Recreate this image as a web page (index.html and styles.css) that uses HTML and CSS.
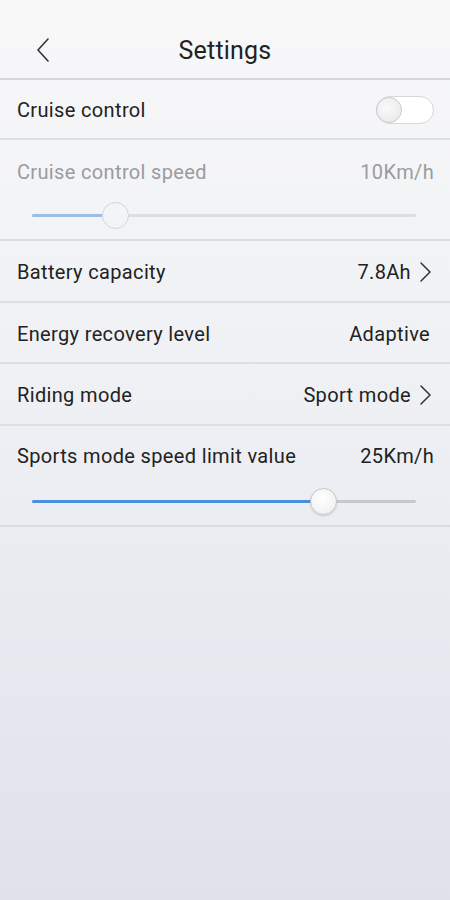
FILE: index.html
```
<!doctype html>
<html lang="en">
<head>
  <meta charset="utf-8">
  <title>Settings</title>
  <meta name="viewport" content="width=device-width, initial-scale=1">
  <link rel="stylesheet" href="styles.css">
</head>
<body>
  <header class="topbar">
    <button class="back" aria-label="Back">
      <svg width="16" height="26" viewBox="0 0 16 26"><path d="M13 2 L3 13 L13 24" fill="none" stroke="#333" stroke-width="1.6" stroke-linecap="round" stroke-linejoin="round"/></svg>
    </button>
    <h1>Settings</h1>
  </header>

  <div class="list">
    <div class="row first">
      <span class="label">Cruise control</span>
      <span class="toggle"><span class="knob"></span></span>
    </div>

    <div class="row tall disabled">
      <div class="line">
        <span class="label">Cruise control speed</span>
        <span class="value">10Km/h</span>
      </div>
      <div class="slider">
        <div class="track"><div class="fill" style="width:21.6%"></div></div>
        <span class="thumb" style="left:21.6%"></span>
      </div>
    </div>

    <div class="row">
      <span class="label">Battery capacity</span>
      <span class="value">7.8Ah <svg class="chev" width="14" height="22" viewBox="0 0 14 22"><path d="M3 2 L12 11 L3 20" fill="none" stroke="#333" stroke-width="1.5" stroke-linecap="round" stroke-linejoin="round"/></svg></span>
    </div>

    <div class="row">
      <span class="label">Energy recovery level</span>
      <span class="value pad">Adaptive</span>
    </div>

    <div class="row">
      <span class="label">Riding mode</span>
      <span class="value">Sport mode <svg class="chev" width="14" height="22" viewBox="0 0 14 22"><path d="M3 2 L12 11 L3 20" fill="none" stroke="#333" stroke-width="1.5" stroke-linecap="round" stroke-linejoin="round"/></svg></span>
    </div>

    <div class="row tall">
      <div class="line">
        <span class="label">Sports mode speed limit value</span>
        <span class="value">25Km/h</span>
      </div>
      <div class="slider">
        <div class="track"><div class="fill" style="width:75.8%"></div></div>
        <span class="thumb" style="left:75.8%"></span>
      </div>
    </div>
  </div>
</body>
</html>
```

FILE: styles.css
```
:root {
  --text: #222;
  --muted: #9a9b9e;
  --line: #dcdee3;
  --blue: #4a8fe0;
}
html { height: 100%; }
body {
  margin: 0;
  min-height: 100%;
  font-family: Roboto, "Noto Sans", sans-serif;
  color: var(--text);
  background: linear-gradient(#f8f8f9 0%, #eef0f4 45%, #dfe2ea 100%);
}
.topbar {
  height: 80px;
  box-sizing: border-box;
  padding-top: 22px;
  display: flex;
  align-items: center;
  justify-content: center;
  position: relative;
  border-bottom: 2px solid #d4d6da;
}
.topbar h1 {
  margin: 0;
  font-size: 25px;
  font-weight: 400;
  letter-spacing: 0.2px;
}
.back {
  position: absolute;
  left: 35px;
  top: 37px;
  background: none;
  border: 0;
  padding: 0;
}
.list { border-bottom: 2px solid #d9dbe0; }
.row {
  height: 61.5px;
  box-sizing: border-box;
  display: flex;
  align-items: center;
  justify-content: space-between;
  padding: 3px 16px 0 17px;
  border-top: 2px solid var(--line);
  font-size: 20px;
  letter-spacing: 0.35px;
}
.row.first { border-top: 0; height: 58px; padding-top: 2px; }
.row.tall {
  height: 101px;
  padding-top: 0;
  flex-direction: column;
  align-items: stretch;
  justify-content: flex-start;
}
.line {
  display: flex;
  justify-content: space-between;
  padding-top: 18px;
}
.disabled .line { padding-top: 20px; }
.disabled { color: var(--muted); }
.value { display: flex; align-items: center; }
.value.pad { padding-right: 4px; }
.chev { margin: 0 2px 0 7px; }
.toggle {
  width: 58px;
  height: 28px;
  box-sizing: border-box;
  border: 1.5px solid #d6d7da;
  border-radius: 14px;
  background: #fff;
  display: flex;
  align-items: center;
}
.knob {
  width: 26px;
  height: 26px;
  margin-left: -1px;
  border-radius: 50%;
  border: 1.5px solid #c9cacd;
  box-sizing: border-box;
  background: radial-gradient(circle at 40% 40%, #fafafa, #e6e6e7);
}
.slider {
  position: relative;
  margin: 32px 18px 0 15px;
  height: 4px;
}
.disabled .slider { margin-top: 30px; }
.track {
  height: 3px;
  background: #c6c8cc;
  border-radius: 2px;
}
.fill {
  height: 100%;
  background: var(--blue);
  border-radius: 2px;
}
.thumb {
  position: absolute;
  top: -12px;
  width: 27px;
  height: 27px;
  margin-left: -13px;
  border-radius: 50%;
  box-sizing: border-box;
  border: 1.5px solid #c4c6ca;
  background: radial-gradient(circle at 45% 40%, #fff, #ececee);
  box-shadow: 0 1px 2px rgba(0,0,0,0.15);
}
.disabled .track { background: #dcdee2; }
.disabled .fill { background: #9cbde6; }
.disabled .thumb { border-color: #d2d4d8; background: #f3f4f6; box-shadow: none; }
```
